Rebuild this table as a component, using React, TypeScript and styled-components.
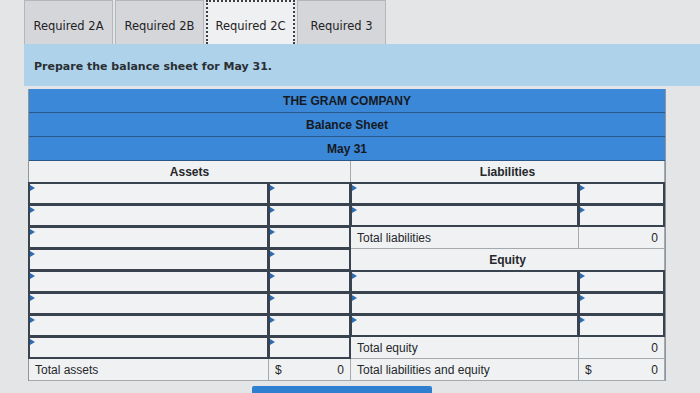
import styled, { createGlobalStyle } from 'styled-components'

const GlobalStyle = createGlobalStyle`
    html, body {
        margin: 0;
        padding: 0;
        background: #e4e5e7;
    }
    body {
        font-family: "Liberation Sans", Arial, sans-serif;
        color: #1d1f22;
    }
`

const Page = styled.div`
    width: 700px;
    height: 393px;
    overflow: hidden;
    padding-left: 24px;
    box-sizing: border-box;
`

const TabBar = styled.div`
    display: flex;
    gap: 2px;
    height: 44px;
`

const Tab = styled.div<{ $active?: boolean }>`
    width: 89px;
    height: 44px;
    box-sizing: border-box;
    display: flex;
    align-items: center;
    justify-content: center;
    padding-top: 6px;
    font-family: "DejaVu Sans", Verdana, sans-serif;
    font-size: 11.5px;
    color: #1f2124;
    background: ${p => (p.$active ? '#eef0f1' : '#d4d6d9')};
    border: ${p => (p.$active ? '2px dotted #3c3f44' : '1px solid #b3b7bb')};
    border-bottom: none;
`

const Instruction = styled.div`
    height: 42px;
    background: #add2ea;
    display: flex;
    align-items: center;
    padding: 2px 0 0 10px;
    box-sizing: border-box;
    font-family: "DejaVu Sans", Verdana, sans-serif;
    font-size: 11px;
    font-weight: bold;
    color: #2a2e33;
`

const Sheet = styled.div`
    margin: 3px 0 0 4px;
    width: 636px;
    display: grid;
    grid-template-columns: 240px 82px 228px 86px;
    grid-template-rows: repeat(3, 24px);
    grid-auto-rows: 22px;
    background: #f0f1f2;
    border-left: 1px solid #8e959c;
    border-right: 1px solid #8e959c;
`

const TitleRow = styled.div`
    grid-column: 1 / -1;
    box-sizing: border-box;
    background: #3b87d8;
    border-bottom: 1px solid #29578a;
    display: flex;
    align-items: center;
    justify-content: center;
    font-size: 12px;
    font-weight: bold;
    color: #16191d;
`

const Cell = styled.div<{ $span?: number; $align?: 'left' | 'center' | 'right' | 'between'; $bold?: boolean }>`
    grid-column: span ${p => p.$span ?? 1};
    box-sizing: border-box;
    display: flex;
    align-items: center;
    justify-content: ${p =>
        p.$align === 'center' ? 'center' : p.$align === 'right' ? 'flex-end' : p.$align === 'between' ? 'space-between' : 'flex-start'};
    padding: 0 6px;
    font-size: 12px;
    font-weight: ${p => (p.$bold ? 'bold' : 'normal')};
    border-right: 1px solid #a4a9ae;
    border-bottom: 1px solid #a4a9ae;
    color: #24272b;
`

const Input = styled.div`
    position: relative;
    box-sizing: border-box;
    border: 2px solid #38434f;
    margin: -1px 0 0 -1px;
    background: #f1f2f3;

    &::before {
        content: '';
        position: absolute;
        top: 1px;
        left: 0;
        border-left: 5px solid #2c6cb3;
        border-top: 3px solid transparent;
        border-bottom: 3px solid transparent;
    }
`

const Footer = styled.div`
    display: flex;
    padding: 5px 0 0 228px;
`

const NextButton = styled.div`
    width: 180px;
    height: 20px;
    background: #2f7fd0;
    border-radius: 2px;
`

const InputPair = () => (
    <>
        <Input />
        <Input />
    </>
)

const Label = ({ children }: { children: React.ReactNode }) => <Cell>{children}</Cell>

const RowPair = ({ right }: { right: React.ReactNode }) => (
    <>
        <Input />
        <Input />
        {right}
    </>
)

export default function App() {
    const left = Array.from({ length: 8 })

    const right: React.ReactNode[] = [
        <InputPair key="l1" />,
        <InputPair key="l2" />,
        <>
            <Label>Total liabilities</Label>
            <Cell $align="right">0</Cell>
        </>,
        <Cell $span={2} $align="center" $bold>Equity</Cell>,
        <InputPair key="e1" />,
        <InputPair key="e2" />,
        <InputPair key="e3" />,
        <>
            <Label>Total equity</Label>
            <Cell $align="right">0</Cell>
        </>,
    ]

    return (
        <Page>
            <GlobalStyle />
            <TabBar>
                <Tab>Required 2A</Tab>
                <Tab>Required 2B</Tab>
                <Tab $active>Required 2C</Tab>
                <Tab>Required 3</Tab>
            </TabBar>
            <Instruction>Prepare the balance sheet for May 31.</Instruction>

            <Sheet>
                <TitleRow>THE GRAM COMPANY</TitleRow>
                <TitleRow>Balance Sheet</TitleRow>
                <TitleRow>May 31</TitleRow>

                <Cell $span={2} $align="center" $bold>Assets</Cell>
                <Cell $span={2} $align="center" $bold>Liabilities</Cell>

                {left.map((_, i) => (
                    <RowPair key={i} right={right[i]} />
                ))}

                <Label>Total assets</Label>
                <Cell $align="between"><span>$</span><span>0</span></Cell>
                <Label>Total liabilities and equity</Label>
                <Cell $align="between"><span>$</span><span>0</span></Cell>
            </Sheet>

            <Footer>
                <NextButton />
            </Footer>
        </Page>
    )
}
